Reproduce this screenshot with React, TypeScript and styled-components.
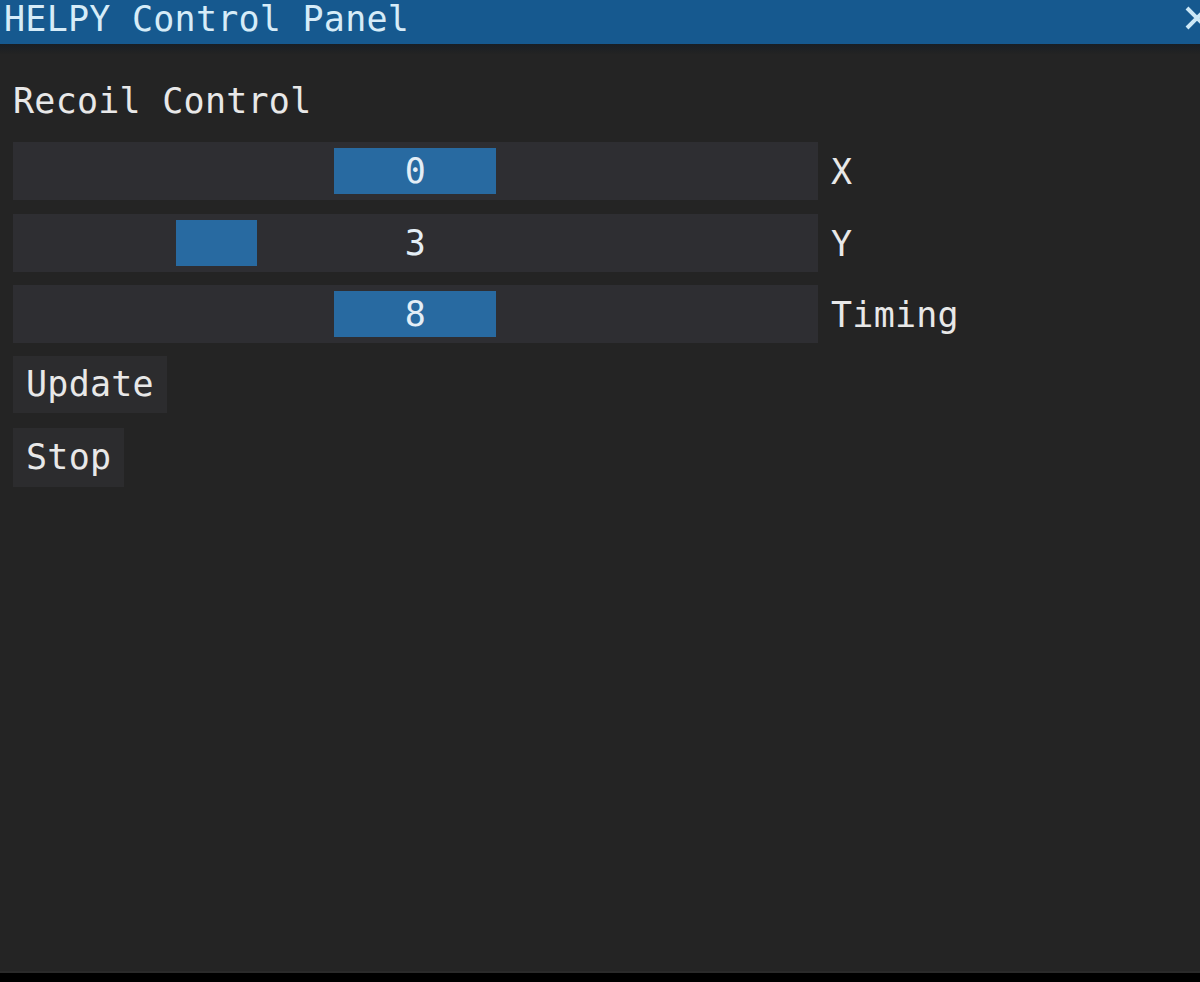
import React from "react";
import styled, { createGlobalStyle } from "styled-components";

const Global = createGlobalStyle`
  html, body { margin: 0; padding: 0; background: #000; overflow: hidden; }
  #root { width: 1200px; height: 982px; }
`;

const FONT = `"DejaVu Sans Mono", "Liberation Mono", monospace`;

const Window = styled.div`
  width: 1200px;
  height: 982px;
  display: flex;
  flex-direction: column;
  background: #242424;
  font-family: ${FONT};
  font-size: 35px;
  letter-spacing: 0.25px;
  color: #e8e8e8;
  overflow: hidden;
`;

const TitleBar = styled.div`
  height: 44px;
  flex: none;
  background: #16598f;
  color: #d6ecf8;
  display: flex;
  align-items: flex-start;
  justify-content: space-between;
  padding-left: 4px;
`;

const Title = styled.span`
  display: block;
  line-height: 38px;
  white-space: nowrap;
`;

const Close = styled.svg`
  width: 26px;
  height: 26px;
  margin-right: -10px;
  margin-top: 5px;
`;

const Shade = styled.div`
  height: 10px;
  flex: none;
  background: linear-gradient(#191e24, #232323);
`;

const Body = styled.div`
  flex: 1;
  display: flex;
  flex-direction: column;
  align-items: flex-start;
  padding: 27px 13px 0;
`;

const Heading = styled.div`
  height: 40px;
  line-height: 40px;
  margin-bottom: 21px;
`;

const Rows = styled.div`
  display: flex;
  flex-direction: column;
  gap: 13.5px;
`;

const Row = styled.div`
  display: flex;
  align-items: center;
  gap: 13px;
  height: 58px;
`;

const Frame = styled.div`
  position: relative;
  width: 805px;
  height: 58px;
  background: #2e2e32;
  display: flex;
  align-items: center;
  justify-content: center;
`;

const Grab = styled.div`
  position: absolute;
  top: 6px;
  bottom: 6px;
  background: #286aa1;
`;

const Value = styled.span`
  position: relative;
  color: #e4eef6;
  line-height: 58px;
`;

const Label = styled.span`
  line-height: 56px;
  padding-top: 2px;
`;

const Buttons = styled.div`
  display: flex;
  flex-direction: column;
  align-items: flex-start;
  gap: 15px;
  margin-top: 13px;
`;

const Button = styled.div<{ $h: number }>`
  height: ${(p) => p.$h}px;
  padding: 0 13px;
  background: #2c2c2e;
  line-height: ${(p) => p.$h}px;
`;

const Footer = styled.div`
  height: 9px;
  flex: none;
  border-top: 2px solid #2a2a2a;
  background: #000;
`;

const sliders = [
  { label: "X", value: "0", left: 321, width: 162 },
  { label: "Y", value: "3", left: 163, width: 81 },
  { label: "Timing", value: "8", left: 321, width: 162 },
];

export default function App() {
  return (
    <>
      <Global />
      <Window>
        <TitleBar>
          <Title>HELPY Control Panel</Title>
          <Close viewBox="0 0 26 26">
            <path d="M3 3 L23 23 M23 3 L3 23" stroke="#cde8f6" strokeWidth="4" />
          </Close>
        </TitleBar>
        <Shade />
        <Body>
          <Heading>Recoil Control</Heading>
          <Rows>
            {sliders.map((s) => (
              <Row key={s.label}>
                <Frame>
                  <Grab style={{ left: s.left, width: s.width }} />
                  <Value>{s.value}</Value>
                </Frame>
                <Label>{s.label}</Label>
              </Row>
            ))}
          </Rows>
          <Buttons>
            <Button $h={57}>Update</Button>
            <Button $h={59}>Stop</Button>
          </Buttons>
        </Body>
        <Footer />
      </Window>
    </>
  );
}
